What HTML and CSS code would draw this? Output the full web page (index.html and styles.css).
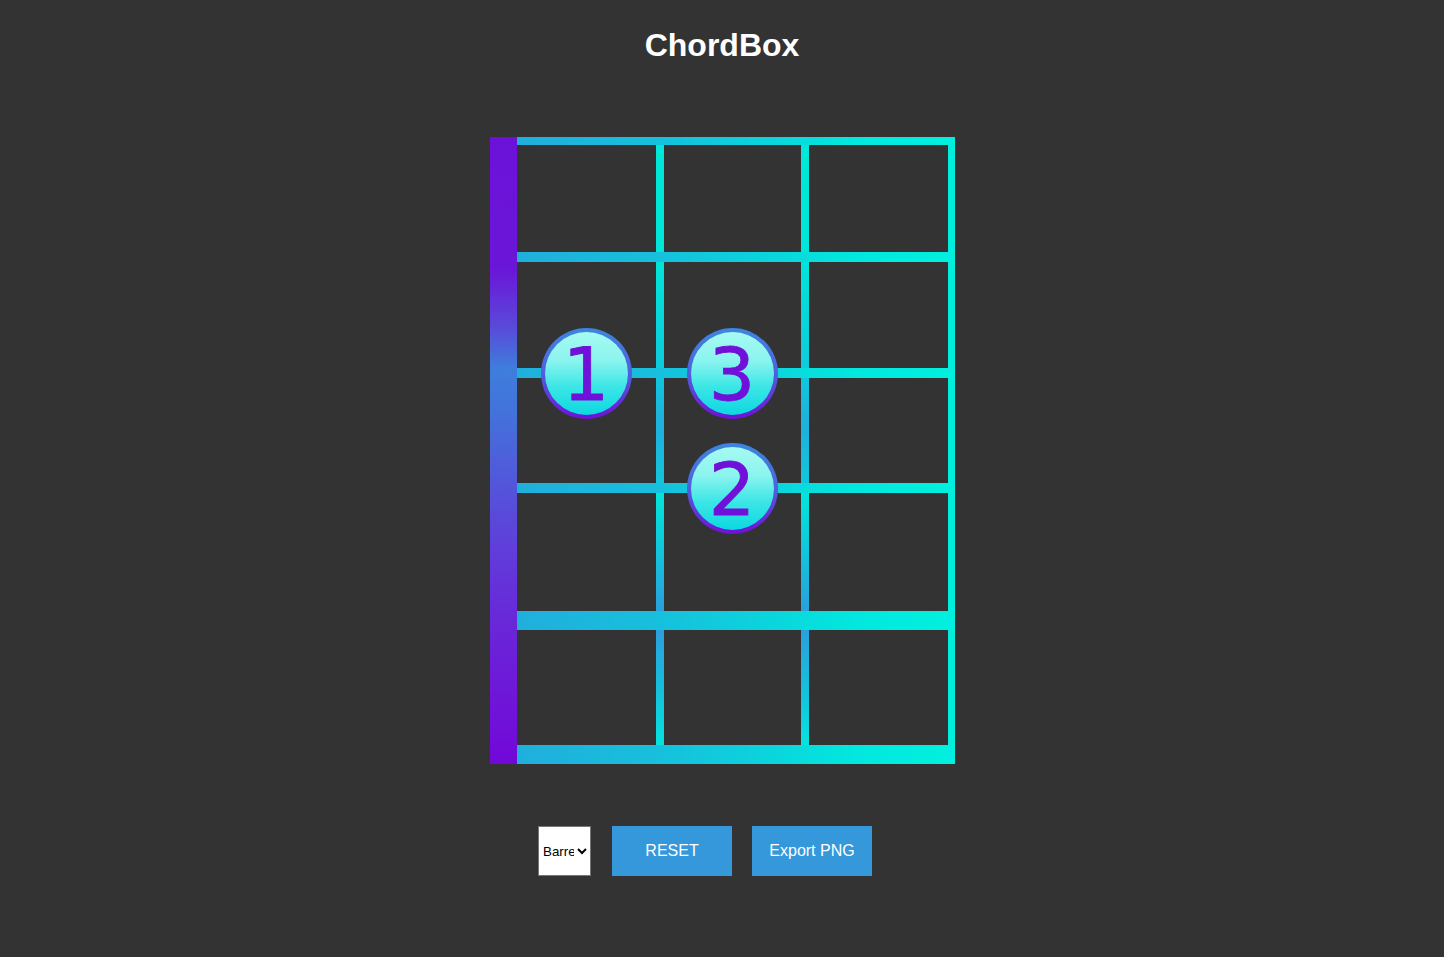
FILE: index.html
```html
<!DOCTYPE html>
<html lang="en">
<head>
<meta charset="utf-8">
<title>ChordBox</title>
<link rel="stylesheet" href="styles.css">
</head>
<body>
<h1 class="title">ChordBox</h1>
<div class="chord">
  <div class="nut"></div>
  <div class="fretboard">
    <div class="vline c2"></div>
    <div class="vline c4"></div>
    <div class="edge"></div>
    <div class="hline r1"></div>
    <div class="hline r3"></div>
    <div class="hline r5"></div>
    <div class="hline r7"></div>
    <div class="hline r9 thick"></div>
    <div class="hline r11 thick"></div>
    <div class="dot d1"><span>1</span></div>
    <div class="dot d3"><span>3</span></div>
    <div class="dot d2"><span>2</span></div>
  </div>
</div>
<div class="controls">
  <select class="mode">
    <option>Barre</option>
  </select>
  <button class="btn">RESET</button>
  <button class="btn">Export PNG</button>
</div>
</body>
</html>
```

FILE: styles.css
```css
html, body {
  margin: 0;
  padding: 0;
  background: #333333;
}

body {
  font-family: "Liberation Sans", Arial, sans-serif;
}

.title {
  margin: 0;
  padding-top: 27px;
  height: 37px;
  line-height: 37px;
  font-size: 32px;
  font-weight: bold;
  color: #ffffff;
  text-align: center;
}

.chord {
  display: flex;
  justify-content: center;
  margin-top: 73px;
}

.nut {
  width: 27px;
  height: 627px;
  background: linear-gradient(to bottom,
    #6c12d8 0%,
    #6a16d8 21%,
    #5a48da 30%,
    #3e7edb 37%,
    #4470db 45%,
    #5454da 56%,
    #6434da 70%,
    #6c20d8 82%,
    #7208d8 100%);
}

.fretboard {
  display: grid;
  grid-template-columns: 139px 8px 137px 8px 139px 7px;
  grid-template-rows: 8px 107px 10px 106px 10px 105px 10px 118px 19px 115px 19px;
  background: #333333;
}

.vline {
  grid-row: 1 / -1;
  background: linear-gradient(to bottom,
    #00e8d8 0px,
    #00e6d8 120px,
    #0fcadc 231px,
    #1fb0dc 290px,
    #12c6dc 346px,
    #02e6d8 356px,
    #14c2dc 420px,
    #2aa0dc 474px,
    #2aa0dc 493px,
    #14c4dc 560px,
    #00f0de 627px);
}

.c2 { grid-column: 2; }
.c4 { grid-column: 4; }

.edge {
  grid-row: 1 / -1;
  grid-column: 6;
  background: #00efdd;
}

.hline {
  grid-column: 1 / -1;
  z-index: 1;
  background: linear-gradient(to right,
    #20afdc 0%,
    #18bedc 30%,
    #0cd2dc 55%,
    #02e8de 78%,
    #00f0de 100%);
}

.r1 { grid-row: 1; }
.r3 { grid-row: 3; }
.r5 { grid-row: 5; }
.r7 { grid-row: 7; }
.r9 { grid-row: 9; }
.r11 { grid-row: 11; }

.dot {
  z-index: 2;
  box-sizing: border-box;
  width: 91px;
  height: 91px;
  justify-self: center;
  align-self: center;
  border: 4px solid transparent;
  border-radius: 50%;
  background:
    linear-gradient(to bottom, #a6faf2 0%, #8af4ee 35%, #3ee6e6 65%, #0cd8e0 100%) padding-box,
    linear-gradient(to bottom, #3c86e0 0%, #5060dc 50%, #7010d8 100%) border-box;
  display: flex;
  align-items: center;
  justify-content: center;
}

.dot span {
  font-family: "DejaVu Sans", sans-serif;
  font-size: 73px;
  line-height: 1;
  color: #7010d8;
  -webkit-text-stroke: 0.8px #7010d8;
  margin-top: 2px;
}

.d1 { grid-column: 1; grid-row: 5; }
.d3 { grid-column: 3; grid-row: 5; }
.d2 { grid-column: 3; grid-row: 7; }

.controls {
  display: flex;
  justify-content: center;
  align-items: center;
  gap: 21px;
  margin-top: 62px;
  padding-right: 34px;
}

.mode {
  box-sizing: border-box;
  width: 53px;
  height: 50px;
  background: #ffffff;
  border: 1px solid #767676;
  border-radius: 0;
  font-family: "Liberation Sans", Arial, sans-serif;
  font-size: 13.33px;
  color: #000000;
  padding: 0;
}

.btn {
  width: 120px;
  height: 50px;
  border: none;
  background: #3498db;
  color: #ffffff;
  font-family: "Liberation Sans", Arial, sans-serif;
  font-size: 16px;
  padding: 0;
}

.btn + .btn {
  margin-left: -1px;
}
```
